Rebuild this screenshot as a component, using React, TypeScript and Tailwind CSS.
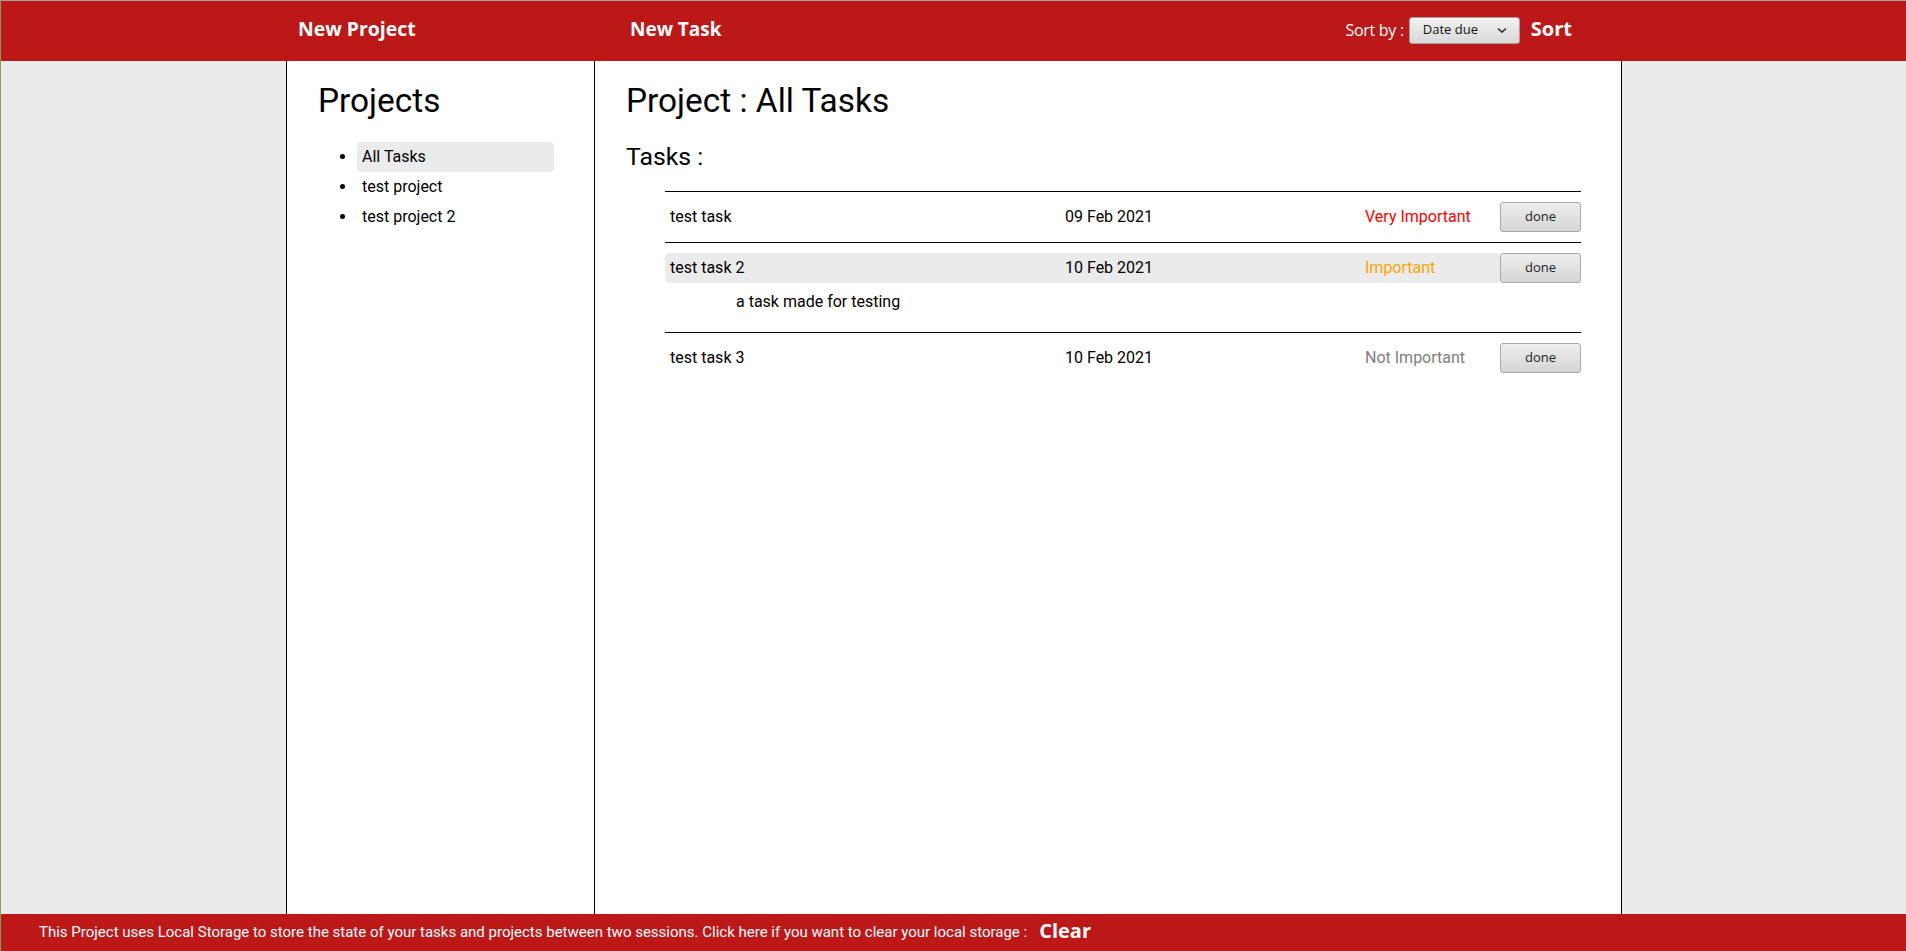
import { useState } from 'react';

type Task = {
  name: string;
  date: string;
  priority: 'Very Important' | 'Important' | 'Not Important';
  description?: string;
};

const tasks: Task[] = [
  { name: 'test task', date: '09 Feb 2021', priority: 'Very Important' },
  { name: 'test task 2', date: '10 Feb 2021', priority: 'Important', description: 'a task made for testing' },
  { name: 'test task 3', date: '10 Feb 2021', priority: 'Not Important' },
];

const projects = ['All Tasks', 'test project', 'test project 2'];

const priorityColor: Record<Task['priority'], string> = {
  'Very Important': 'text-[#ff0000]',
  Important: 'text-[#ffa500]',
  'Not Important': 'text-[#808080]',
};

function DoneButton() {
  return (
    <button className="w-[81px] h-[30px] shrink-0 rounded-[3px] border border-[#a9a9a9] bg-gradient-to-b from-[#eeeeee] to-[#d5d5d5] text-[13px] text-[#222] font-['Open_Sans',sans-serif]">
      done
    </button>
  );
}

function TaskItem({ task, open }: { task: Task; open: boolean }) {
  return (
    <li className="border-t border-black py-[10px]">
      <div className="flex">
        <div
          className={`flex-1 grid grid-cols-[395px_300px_1fr] items-center h-[30px] px-[5px] rounded-[4px] ${
            open ? 'bg-[#ebebeb]' : ''
          }`}
        >
          <span>{task.name}</span>
          <span>{task.date}</span>
          <span className={priorityColor[task.priority]}>{task.priority}</span>
        </div>
        <DoneButton />
      </div>
      {open && task.description && (
        <p className="pl-[71px] mt-[9px] mb-[11px] leading-[19px]">{task.description}</p>
      )}
    </li>
  );
}

export default function App() {
  const [selected] = useState(0);

  return (
    <div className="h-screen flex flex-col border-t border-l border-t-[#a3a3a3] border-l-[#7ea35c] bg-[#ebebeb] font-['Roboto',sans-serif] text-[16px] text-black overflow-hidden">
      {/* header */}
      <header className="h-[60px] shrink-0 flex bg-[#bc1818] text-white">
        <div className="w-[285px] shrink-0" />
        <div className="w-[1336px] shrink-0 flex items-center">
          <div className="w-[307px] pl-[12px] shrink-0 text-[19.4px] font-bold font-['Open_Sans',sans-serif] -mt-[4px]">
            New Project
          </div>
          <div className="flex-1 flex items-center pl-[37px] pr-[50px]">
            <span className="text-[19px] font-bold font-['Open_Sans',sans-serif] -mt-[4px]">New Task</span>
            <div className="ml-auto flex items-center -mt-[2px]">
              <span className="text-[16px] font-['Open_Sans',sans-serif] mr-[5px] tracking-[-0.3px]">Sort by :</span>
              <div className="w-[111px] h-[27px] flex items-center justify-between pl-[13px] pr-[12px] rounded-[3px] border border-[#a0a0a0] bg-gradient-to-b from-[#f2f2f2] to-[#d8d8d8] text-[13px] text-[#111] font-['Open_Sans',sans-serif]">
                <span>Date due</span>
                <svg width="10" height="7" viewBox="0 0 10 7" fill="none">
                  <path d="M1 1.5 L5 5.2 L9 1.5" stroke="#333" strokeWidth="1.6" />
                </svg>
              </div>
              <span className="ml-[11px] text-[20px] font-bold font-['Open_Sans',sans-serif] -mt-[2px]">Sort</span>
            </div>
          </div>
        </div>
      </header>

      {/* body */}
      <div className="flex-1 flex min-h-0">
        <div className="w-[285px] shrink-0" />
        <div className="w-[1336px] shrink-0 flex bg-white border-x border-black">
          <aside className="w-[308px] shrink-0 border-r border-black pl-[31px] pr-[40px]">
            <h1 className="mt-[21px] text-[33.4px] leading-[38px]">Projects</h1>
            <ul className="mt-[22px] pl-[39px] list-disc">
              {projects.map((p, i) => (
                <li
                  key={p}
                  className={`h-[30px] leading-[30px] px-[5px] rounded-[4px] ${i === selected ? 'bg-[#ebebeb]' : ''}`}
                >
                  {p}
                </li>
              ))}
            </ul>
          </aside>

          <main className="flex-1 pl-[31px] pr-[40px]">
            <h1 className="mt-[21px] text-[33.4px] leading-[38px]">Project : All Tasks</h1>
            <h2 className="mt-[23px] text-[24.8px] leading-[28px]">Tasks :</h2>
            <ul className="mt-[20px] ml-[39px]">
              {tasks.map((t, i) => (
                <TaskItem key={t.name} task={t} open={i === 1} />
              ))}
            </ul>
          </main>
        </div>
      </div>

      {/* footer */}
      <footer className="h-[37px] shrink-0 flex items-center bg-[#bc1818] text-white pl-[38px]">
        <span className="text-[15px]">
          This Project uses Local Storage to store the state of your tasks and projects between two sessions. Click here
          if you want to clear your local storage :
        </span>
        <span className="ml-[12px] text-[20px] font-bold font-['Open_Sans',sans-serif] -mt-[3px]">Clear</span>
      </footer>
    </div>
  );
}
